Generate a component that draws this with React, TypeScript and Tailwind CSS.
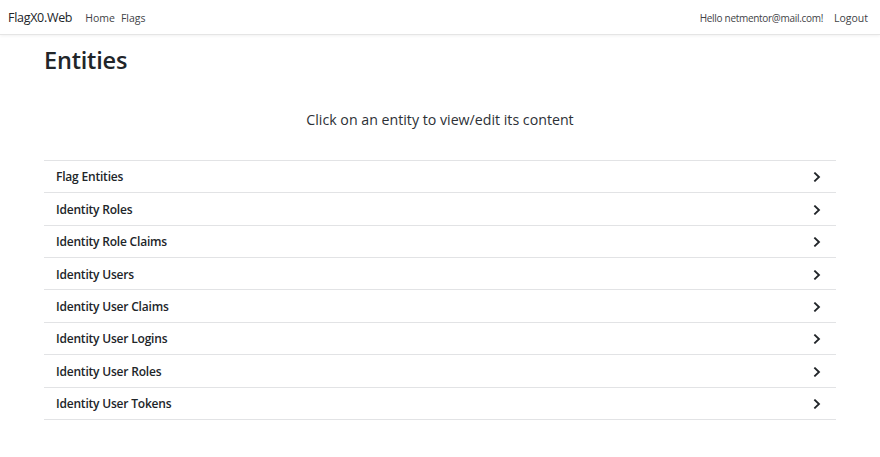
import React from "react";

const items = [
  "Flag Entities",
  "Identity Roles",
  "Identity Role Claims",
  "Identity Users",
  "Identity User Claims",
  "Identity User Logins",
  "Identity User Roles",
  "Identity User Tokens",
];

function Chevron() {
  return (
    <svg width="10" height="10" viewBox="0 0 10 10" fill="none">
      <path d="M3 1.2 L7 5 L3 8.8" stroke="#212529" strokeWidth="1.8" strokeLinecap="square" strokeLinejoin="miter" />
    </svg>
  );
}

export default function App() {
  return (
    <div className="min-h-[457px] bg-white text-[#212529]" style={{ fontFamily: '"Open Sans", "Noto Sans", sans-serif' }}>
      <nav className="h-[35px] flex items-center justify-between px-2 pt-[3px] border-b border-[#e5e5e5] shadow-[0_1px_3px_rgba(0,0,0,0.06)]">
        <div className="flex items-center">
          <span className="text-[12.5px] text-[#212529] mr-[13px] tracking-[-0.3px]">FlagX0.Web</span>
          <span className="text-[10.5px] text-[#3f4347] mr-[6px]">Home</span>
          <span className="text-[10.5px] text-[#3f4347]">Flags</span>
        </div>
        <div className="flex items-center pr-[4px]">
          <span className="text-[10px] text-[#3f4347] mr-[11px] tracking-[-0.3px]">Hello netmentor@mail.com!</span>
          <span className="text-[10.5px] text-[#3f4347]">Logout</span>
        </div>
      </nav>
      <main className="mx-[44px]">
        <h1 className="text-[23.5px] font-semibold leading-none mt-[14px] tracking-[-0.2px]">Entities</h1>
        <p className="text-center text-[14.2px] mt-[36px] text-[#2d3136]">Click on an entity to view/edit its content</p>
        <div className="mt-[30px] border-t border-[#e2e3e5]">
          {items.map((it) => (
            <div key={it} className="h-[32.4px] flex items-center justify-between pl-[12px] pr-[14px] pt-[2px] border-b border-[#e2e3e5]">
              <span className="text-[12px] font-semibold text-[#212529] tracking-[-0.2px]">{it}</span>
              <Chevron />
            </div>
          ))}
        </div>
      </main>
    </div>
  );
}
